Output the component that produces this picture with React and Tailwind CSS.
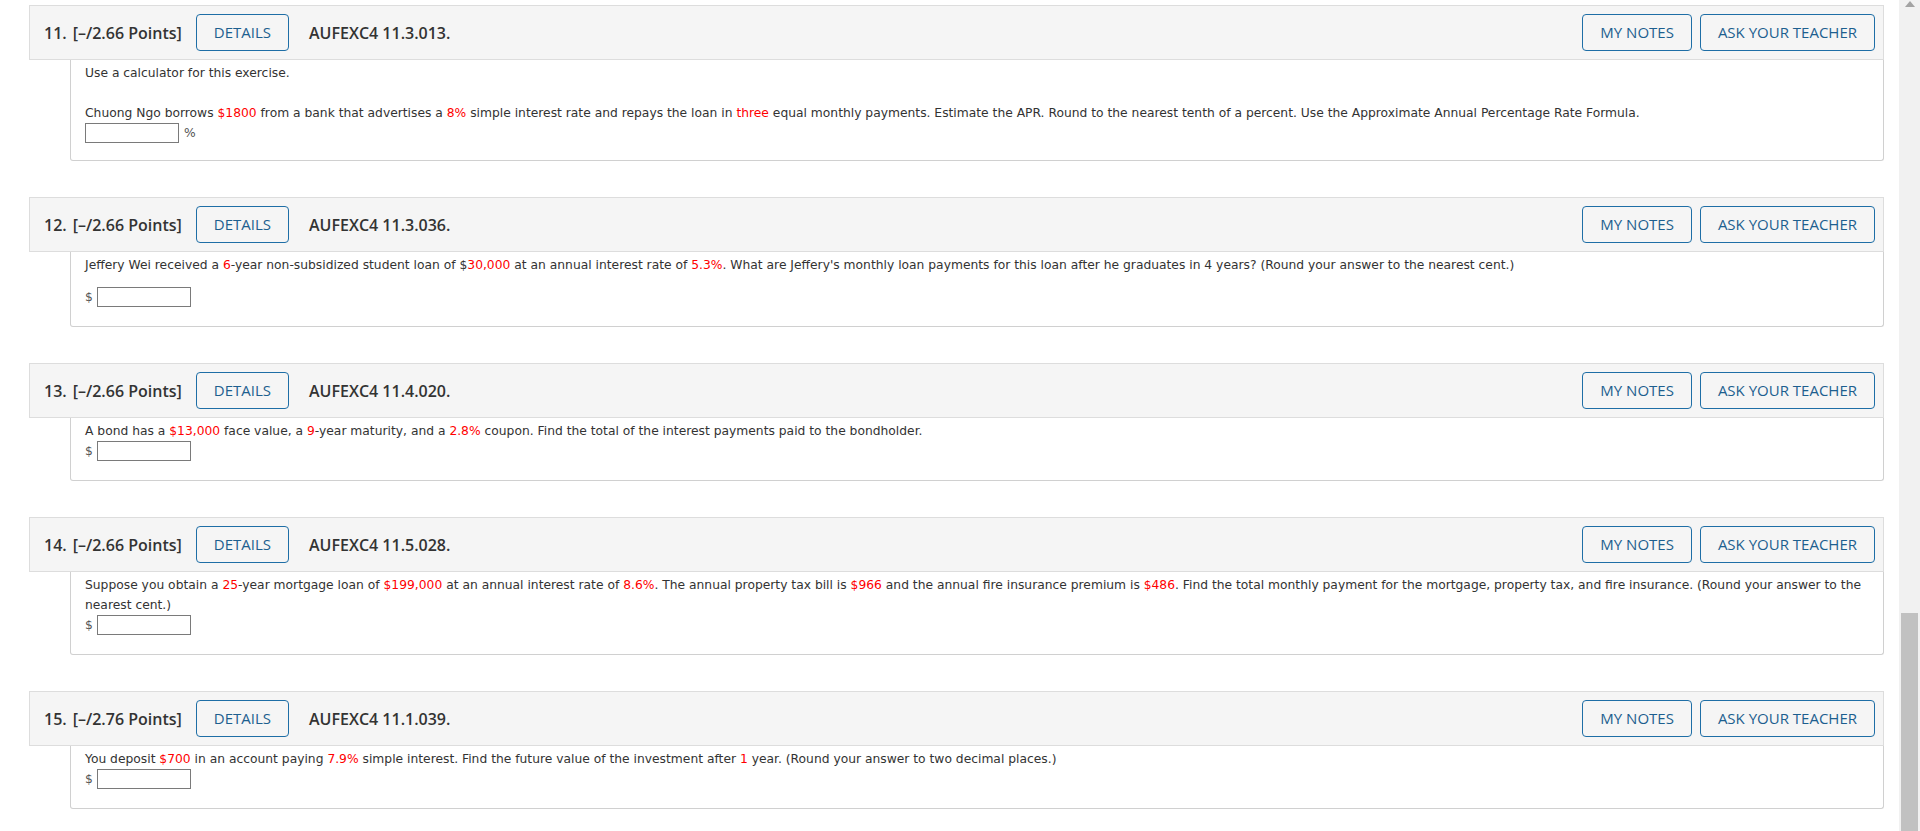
import React from "react";

const R = ({ children }) => <span className="text-[#ff0000]">{children}</span>;

const questions = [
  {
    num: "11.",
    points: "[–/2.66 Points]",
    code: "AUFEXC4 11.3.013.",
    pb: "pb-[17px]",
    body: (
      <>
        <p>Use a calculator for this exercise.</p>
        <p className="mt-[20px]">
          Chuong Ngo borrows <R>$1800</R> from a bank that advertises a <R>8%</R> simple interest
          rate and repays the loan in <R>three</R> equal monthly payments. Estimate the APR. Round
          to the nearest tenth of a percent. Use the Approximate Annual Percentage Rate Formula.
        </p>
        <div className="flex items-center h-[20px]">
          <input type="text" className="w-[94px] h-[20px] border border-[#7a7a7a] bg-white" />
          <span className="ml-[5px] text-[#555]">%</span>
        </div>
      </>
    ),
  },
  {
    num: "12.",
    points: "[–/2.66 Points]",
    code: "AUFEXC4 11.3.036.",
    pb: "pb-[19px]",
    body: (
      <>
        <p>
          Jeffery Wei received a <R>6</R>-year non-subsidized student loan of $<R>30,000</R> at an
          annual interest rate of <R>5.3%</R>. What are Jeffery's monthly loan payments for this
          loan after he graduates in 4 years? (Round your answer to the nearest cent.)
        </p>
        <div className="mt-[12px] flex items-center h-[20px]">
          <span className="text-[#555]">$</span>
          <input type="text" className="ml-[4px] w-[94px] h-[20px] border border-[#7a7a7a] bg-white" />
        </div>
      </>
    ),
  },
  {
    num: "13.",
    points: "[–/2.66 Points]",
    code: "AUFEXC4 11.4.020.",
    pb: "pb-[19px]",
    body: (
      <>
        <p>
          A bond has a <R>$13,000</R> face value, a <R>9</R>-year maturity, and a <R>2.8%</R> coupon.
          Find the total of the interest payments paid to the bondholder.
        </p>
        <div className="flex items-center h-[20px]">
          <span className="text-[#555]">$</span>
          <input type="text" className="ml-[4px] w-[94px] h-[20px] border border-[#7a7a7a] bg-white" />
        </div>
      </>
    ),
  },
  {
    num: "14.",
    points: "[–/2.66 Points]",
    code: "AUFEXC4 11.5.028.",
    pb: "pb-[19px]",
    body: (
      <>
        <p>
          Suppose you obtain a <R>25</R>-year mortgage loan of <R>$199,000</R> at an annual interest
          rate of <R>8.6%</R>. The annual property tax bill is <R>$966</R> and the annual fire
          insurance premium is <R>$486</R>. Find the total monthly payment for the mortgage,
          property tax, and fire insurance. (Round your answer to the nearest cent.)
        </p>
        <div className="flex items-center h-[20px]">
          <span className="text-[#555]">$</span>
          <input type="text" className="ml-[4px] w-[94px] h-[20px] border border-[#7a7a7a] bg-white" />
        </div>
      </>
    ),
  },
  {
    num: "15.",
    points: "[–/2.76 Points]",
    code: "AUFEXC4 11.1.039.",
    pb: "pb-[19px]",
    body: (
      <>
        <p>
          You deposit <R>$700</R> in an account paying <R>7.9%</R> simple interest. Find the future
          value of the investment after <R>1</R> year. (Round your answer to two decimal places.)
        </p>
        <div className="flex items-center h-[20px]">
          <span className="text-[#555]">$</span>
          <input type="text" className="ml-[4px] w-[94px] h-[20px] border border-[#7a7a7a] bg-white" />
        </div>
      </>
    ),
  },
];

const OutlineButton = ({ children }) => (
  <button className="h-[37px] px-[17px] border border-[#1e6ea6] rounded-[4px] text-[15px] font-medium text-[#1d5f8f] bg-transparent leading-none">
    {children}
  </button>
);

function Question({ q }) {
  return (
    <section>
      <div className="flex items-center h-[55px] pl-[14px] pr-[8px] bg-[#f5f5f5] border border-[#dddddd] font-['Open_Sans',sans-serif] text-[16px] text-[#333333]">
        <span className="font-semibold mr-[6px]">{q.num}</span>
        <span className="font-semibold">{q.points}</span>
        <div className="ml-[14px]">
          <OutlineButton>DETAILS</OutlineButton>
        </div>
        <span className="ml-[20px] font-semibold">{q.code}</span>
        <div className="ml-auto flex gap-[8px]">
          <OutlineButton>MY NOTES</OutlineButton>
          <OutlineButton>ASK YOUR TEACHER</OutlineButton>
        </div>
      </div>
      <div
        className={`ml-[41px] bg-white border border-t-0 border-[#d0d0d0] rounded-b-[3px] pl-[14px] pr-[15px] pt-[3px] ${q.pb} font-['DejaVu_Sans',Verdana,sans-serif] text-[12.3px] leading-[20px] text-[#333333]`}
      >
        {q.body}
      </div>
    </section>
  );
}

export default function App() {
  return (
    <div className="flex h-[831px] overflow-hidden bg-white">
      <main className="flex-1 flex flex-col gap-[36px] pl-[29px] pr-[15px] pt-[5px]">
        {questions.map((q) => (
          <Question key={q.num} q={q} />
        ))}
      </main>

      {/* scrollbar */}
      <div className="w-[21px] bg-[#f1f1f1] flex flex-col">
        <div className="h-[613px] flex justify-center pt-[1px]">
          <svg width="10" height="6" viewBox="0 0 10 6">
            <polygon points="5,0 10,6 0,6" fill="#a3a3a3" />
          </svg>
        </div>
        <div className="flex-1 mx-[2px] bg-[#c1c1c1]" />
      </div>
    </div>
  );
}
